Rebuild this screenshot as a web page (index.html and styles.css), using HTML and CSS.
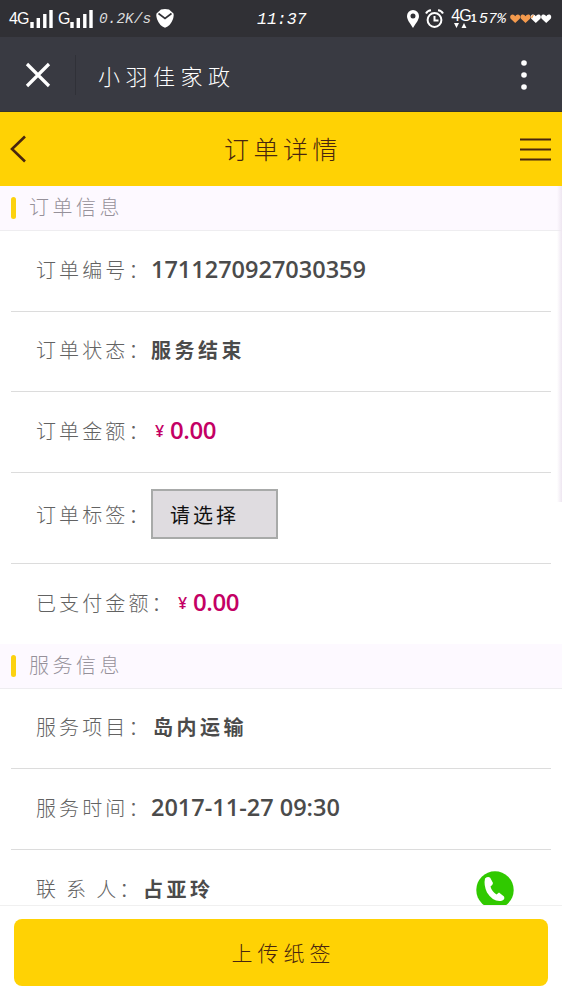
FILE: index.html
```html
<!DOCTYPE html>
<html lang="zh-CN">
<head>
<meta charset="utf-8">
<title>订单详情</title>
<link rel="stylesheet" href="styles.css">
</head>
<body>
<div class="screen">
  <header class="status">
    <div class="status-left">
      <span class="net">4G</span>
      <svg class="signal" width="23" height="18" viewBox="0 0 23 18"><path d="M2 12v6M8.3 8v10M14.8 4v14M21 0v18" stroke="#fff" stroke-width="3.4"/></svg>
      <span class="net g">G</span>
      <svg class="signal" width="23" height="18" viewBox="0 0 23 18"><path d="M2 12v6M8.3 8v10M14.8 4v14M21 0v18" stroke="#fff" stroke-width="3.4"/></svg>
      <span class="speed">0.2K/s</span>
      <svg class="shield" width="18" height="19" viewBox="0 0 18 19"><path d="M5 .5Q9-.5 13 .5L17.500 4.500Q18 7 17 10Q14.500 17 9 18.700Q3.500 17 1 10Q0 7 .5 4.500Z" fill="#fff"/><path d="M2.500 4.500L9 9.500L15.500 4.500" fill="none" stroke="#303035" stroke-width="1.600"/></svg>
    </div>
    <time class="clock">11:37</time>
    <div class="status-right">
      <svg class="pin" width="12" height="18" viewBox="0 0 12 18"><path fill="#fff" fill-rule="evenodd" d="M6 0a6 6 0 0 1 6 6c0 4-3 7-6 12C3 13 0 10 0 6a6 6 0 0 1 6-6ZM6 3.500a2.500 2.500 0 1 0 0 5a2.500 2.500 0 0 0 0-5Z"/></svg>
      <svg class="alarm" width="19" height="19" viewBox="0 0 19 19" fill="none" stroke="#fff" stroke-width="2"><circle cx="9.500" cy="11" r="6.900"/><path d="M9.500 7v4.500h4M1 4.500Q2.500 1.500 6 1.200M18 4.500Q16.500 1.500 13 1.200"/></svg>
      <span class="mobile"><span>4G</span><svg width="14" height="5" viewBox="0 0 14 5"><path fill="#fff" d="M0 0h5L2.500 5ZM7.500 5h5L10 0Z"/></svg></span>
      <span class="sim">1</span>
      <span class="percent">57%</span>
      <svg class="hearts" width="42" height="10" viewBox="0 0 42 10">
        <defs><path id="heart" d="M5.200 9L.7 4.800C-.6 2.600.6.500 2.600.500Q4.300.500 5.200 2.200Q6.100.500 7.800.500C9.800.500 11 2.600 9.700 4.800Z"/></defs>
        <use href="#heart" fill="#f49a4d"/><use href="#heart" x="10.300" fill="#f49a4d"/><use href="#heart" x="20.600" fill="#fff"/><use href="#heart" x="31" fill="#fff"/><path d="M21 3.500Q21.500.500 24 .7L22 4.500Z" fill="#f49a4d"/>
      </svg>
    </div>
  </header>
  <nav class="browser">
    <svg class="close" width="26" height="26" viewBox="0 0 26 26"><path d="M2 2L24 24M24 2L2 24" stroke="#fff" stroke-width="3.200"/></svg>
    <i class="split"></i>
    <span class="site">小羽佳家政</span>
    <svg class="more" width="6" height="30" viewBox="0 0 6 30" fill="#fff"><circle cx="3" cy="3" r="2.800"/><circle cx="3" cy="15" r="2.800"/><circle cx="3" cy="27" r="2.800"/></svg>
  </nav>
  <div class="titlebar">
    <svg width="17" height="28" viewBox="0 0 17 28"><path d="M15 1.500L2 14L15 26.500" fill="none" stroke="#49260f" stroke-width="2.600"/></svg>
    <h1>订单详情</h1>
    <svg width="31" height="23" viewBox="0 0 31 23"><path d="M0 1.500H31M0 11.500H31M0 21.500H31" stroke="#49260f" stroke-width="2"/></svg>
  </div>
  <main class="content">
    <h2 class="section">订单信息</h2>
    <div class="row"><span class="label">订单编号：</span><b class="number">1711270927030359</b></div>
    <div class="row r80"><span class="label">订单状态：</span><b class="value">服务结束</b></div>
    <div class="row"><span class="label">订单金额：</span><span class="price"><i>¥</i>0.00</span></div>
    <div class="row tag"><span class="label">订单标签：</span><button class="select">请选择</button></div>
    <div class="row last"><span class="label paid">已支付金额：</span><span class="price"><i>¥</i>0.00</span></div>
    <h2 class="section second">服务信息</h2>
    <div class="row r80"><span class="label">服务项目：</span><b class="value item">岛内运输</b></div>
    <div class="row"><span class="label">服务时间：</span><b class="number">2017-11-27 09:30</b></div>
    <div class="row contact"><span class="label person"><span>联</span><span>系</span><span>人：</span></span><b class="value">占亚玲</b>
      <svg class="phone" width="38" height="38" viewBox="0 0 38 38"><circle cx="19" cy="19" r="18.700" fill="#30c900"/><path fill="#fff" d="M9 7.500Q12 5 14.200 6.800L17 12Q17 13.500 14.500 15.500Q15.500 20 20.500 23.500L23 21.500L28 25.500Q29.500 28.500 25 30Q17 31 11 21.500Q7.500 14 9 7.500Z"/></svg>
    </div>
    <i class="edge"></i>
  </main>
  <footer class="footer"><button class="upload">上传纸签</button></footer>
</div>
</body>
</html>
```
FILE: styles.css
```css
* { box-sizing: border-box; }
body { margin: 0; }
button { font: inherit; padding: 0; }
svg { display: block; flex: none; }
.screen {
  width: 562px; height: 1000px; overflow: hidden;
  display: flex; flex-direction: column; background: #fff;
  font-family: "Open Sans", "Noto Sans CJK SC", sans-serif;
}
.status, .browser, .titlebar, .footer { flex: none; }
.status {
  height: 37px; background: #303035; color: #fff;
  display: grid; grid-template-columns: 257px 1fr 156px;
  align-items: center; white-space: nowrap;
}
.status-left, .status-right { display: flex; align-items: center; }
.status-left { padding-left: 9px; }
.net { font: 16px/20px "Liberation Sans", sans-serif; width: 21px; letter-spacing: -.8px; }
.net.g { width: 12px; margin-left: 5px; }
.speed, .clock, .percent { font-family: "Liberation Mono", monospace; font-style: italic; }
.speed { font-size: 14.500px; margin-left: 6px; width: 52px; color: #ddd; }
.shield { margin-left: 5px; }
.clock { font-size: 16.500px; padding-top: 2px; }
.pin { margin-left: 1px; }
.alarm { margin-left: 6px; }
.mobile { margin-left: 7px; width: 20px; display: flex; flex-direction: column; align-items: center; font: 16px/14px "Liberation Sans", sans-serif; letter-spacing: -1px; }
.sim { width: 7px; font: bold 10px/12px "Liberation Sans", sans-serif; }
.percent { font-size: 15px; width: 27px; margin-left: 1px; padding-top: 2px; }
.hearts { margin-left: 4px; }
.browser {
  height: 75px; background: #393a42; border-bottom: 1px solid #35352b; color: #fff;
  display: flex; align-items: center; padding: 2px 35px 0 25px;
}
.split { width: 1px; height: 40px; background: #303138; margin-left: 24px; }
.site { margin-left: 22px; font-size: 22px; letter-spacing: 5.500px; flex: 1; font-weight: 300; }
.titlebar {
  height: 74px; background: #ffd204; color: #49260f;
  display: flex; align-items: center; justify-content: space-between; padding: 0 11px 0 10px;
}
.titlebar h1 { margin: 0 0 0 19px; font-size: 25px; line-height: 36px; font-weight: 300; letter-spacing: 4.500px; }
.content { position: relative; height: 719px; flex: none; overflow: hidden; color: #4b4b4b; }
.section {
  margin: 0; height: 45px; background: #fdf9ff; border-bottom: 1px solid #eeedf0;
  display: flex; align-items: center; padding: 0 0 1px 11px;
  color: #96919a; font-size: 20px; line-height: 28px; font-weight: 300; letter-spacing: 3.500px;
}
.section::before { content: ""; width: 5px; height: 22px; border-radius: 3px; background: #fcd210; margin-right: 13px; }
.row {
  height: 81px; margin: 0 11px; padding: 0 0 4px 25px;
  border-bottom: 1px solid #dcdcdc; display: flex; align-items: center; white-space: nowrap;
}
.r80 { height: 80px; }
.label { width: 115px; flex: none; font-size: 20px; font-weight: 300; letter-spacing: 3.100px; color: #626262; }
.number { font-size: 23.500px; line-height: 30px; font-weight: 600; }
.value { font-size: 20px; font-weight: 700; letter-spacing: 3.500px; }
.item { padding-left: 2px; }
.price { display: flex; align-items: center; color: #c40064; font-size: 24px; line-height: 30px; font-weight: 600; letter-spacing: -.4px; }
.price i { width: 19px; padding: 2px 0 0 4px; font-size: 16px; font-style: normal; }
.tag { height: 91px; padding-bottom: 8px; }
.select {
  width: 127px; height: 50px; padding-left: 17px; text-align: left;
  border: 2px solid #a8aaa9; background: #dfdce0; color: #111;
  font-size: 20px; letter-spacing: 3px; border-radius: 0;
}
.last { height: 80px; border: 0; padding-bottom: 4px; }
.label.paid { width: 138px; }
.section.second { height: 45px; }
.row.contact { height: 80px; padding-right: 37px; padding-bottom: 4px; border: 0; }
.person { width: 107px; display: flex; gap: 7px; }
.phone { margin: 4px 0 0 auto; }
.edge { position: absolute; right: 0; top: 0; width: 5px; height: 316px; background: linear-gradient(to right, rgba(240,232,242,0), #eee6f1); }
.footer { height: 95px; border-top: 1px solid #f0f0f0; padding: 13px 14px; background: #fff; }
.upload {
  width: 100%; height: 67px; border: 0; border-radius: 8px; background: #ffd204;
  color: #49260f; font-size: 21px; font-weight: 300; letter-spacing: 5px; padding: 0 0 2px 5px;
}
```
